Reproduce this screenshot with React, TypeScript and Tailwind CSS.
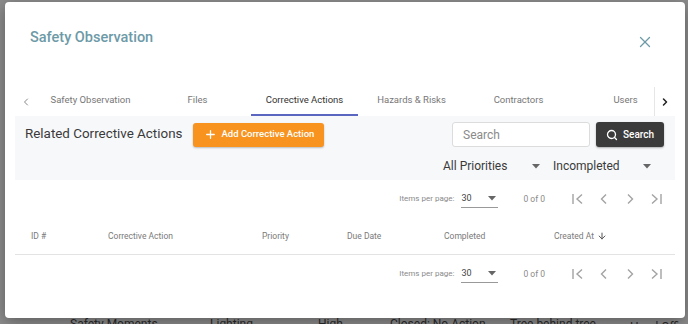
import { X, Plus, Search, ChevronLeft, ChevronRight, ArrowDown } from 'lucide-react';

const font = { fontFamily: 'Roboto, "Liberation Sans", sans-serif' };

const tabs = ['Safety Observation', 'Files', 'Corrective Actions', 'Hazards & Risks', 'Contractors', 'Users'];

function Caret() {
  return (
    <svg width="8" height="5" viewBox="0 0 8 5" className="shrink-0">
      <path d="M0 0 L8 0 L4 4.5 Z" fill="#666" />
    </svg>
  );
}

function PageIcons() {
  return (
    <div className="flex items-center gap-[12px] text-[#a3a3a3]">
      <svg width="14" height="14" viewBox="0 0 14 14" fill="none" stroke="currentColor" strokeWidth="1.4">
        <path d="M2 2 V12" />
        <path d="M11 2.5 L6 7 L11 11.5" />
      </svg>
      <svg width="14" height="14" viewBox="0 0 14 14" fill="none" stroke="currentColor" strokeWidth="1.4">
        <path d="M9 2.5 L4.5 7 L9 11.5" />
      </svg>
      <svg width="14" height="14" viewBox="0 0 14 14" fill="none" stroke="currentColor" strokeWidth="1.4">
        <path d="M5 2.5 L9.5 7 L5 11.5" />
      </svg>
      <svg width="14" height="14" viewBox="0 0 14 14" fill="none" stroke="currentColor" strokeWidth="1.4">
        <path d="M3 2.5 L8 7 L3 11.5" />
        <path d="M12 2 V12" />
      </svg>
    </div>
  );
}

function Paginator() {
  return (
    <div className="flex h-[38px] items-center justify-end pr-[12px] text-[8px] text-[#8a8a8a]">
      <span>Items per page:</span>
      <div className="ml-[7px] flex h-[18px] w-[37px] items-center justify-between border-b border-[#999] pr-[2px] text-[9px] text-[#444]">
        <span>30</span>
        <Caret />
      </div>
      <span className="ml-[25px] mr-[26px] text-[8.5px]">0 of 0</span>
      <PageIcons />
    </div>
  );
}

export default function App() {
  return (
    <div className="relative h-[324px] w-[688px] overflow-hidden bg-[#8d8d8d]" style={font}>
      {/* page behind the overlay */}
      <div className="flex h-full flex-col justify-end text-[12px] text-[#2a2a2a]">
        <div className="grid h-[8px] grid-cols-[140px_108px_72px_120px_120px_1fr] whitespace-nowrap pl-[70px] leading-[16px]">
          <span>Safety Moments</span>
          <span>Lighting</span>
          <span>High</span>
          <span>Closed: No Action</span>
          <span>Tree behind tree</span>
          <span className="pt-[3px]">Head Office</span>
        </div>
      </div>

      {/* dialog */}
      <div className="absolute left-[5px] top-[2px] flex h-[316px] w-[680px] flex-col rounded-[4px] bg-white shadow-[0_4px_16px_rgba(0,0,0,0.35)]">
        <div className="flex h-[85px] items-start justify-between pl-[25px] pr-[31px]">
          <h2 className="mt-[25px] text-[14.5px] font-medium text-[#6d9aa7]">Safety Observation</h2>
          <X className="mt-[31px]" size={18} color="#6d9aa7" strokeWidth={1.7} />
        </div>

        <div className="mx-[10px] flex h-[29px]">
          <div className="flex w-[22px] items-center justify-center text-[#888]">
            <ChevronLeft size={12} strokeWidth={2} />
          </div>
          <div className="flex flex-1 overflow-hidden">
            {tabs.map((t) => (
              <div
                key={t}
                className={
                  t === 'Corrective Actions'
                    ? 'flex w-[107px] shrink-0 items-center justify-center border-b-2 border-[#5a66c0] text-[9.5px] text-[#333]'
                    : 'flex w-[107px] shrink-0 items-center justify-center border-b-2 border-transparent text-[9.5px] text-[#777]'
                }
              >
                {t}
              </div>
            ))}
          </div>
          <div className="flex w-[21px] items-center justify-center border-l border-[#e6e6e6] text-[#222]">
            <ChevronRight size={12} strokeWidth={3} />
          </div>
        </div>

        <div className="mx-[10px] flex flex-1 flex-col">
          <div className="flex h-[64px] flex-col bg-[#f7f8fa] pl-[10px] pr-[11px] pt-[6px]">
            <div className="flex h-[25px] items-center">
              <span className="text-[13.4px] text-[#3a3a3a]">Related Corrective Actions</span>
              <button className="ml-[11px] flex h-[24px] w-[131px] items-center justify-center gap-[5px] rounded-[3px] bg-[#f7931e] text-[9.5px] font-medium text-white shadow-[0_1px_2px_rgba(0,0,0,0.25)]">
                <Plus size={13} strokeWidth={2.4} />
                Add Corrective Action
              </button>
              <div className="ml-auto flex h-[25px] w-[138px] items-center rounded-[3px] border border-[#dcdcdc] bg-white pl-[10px] text-[12px] text-[#8a8a8a]">
                Search
              </div>
              <button className="ml-[6px] flex h-[25px] w-[68px] items-center justify-center gap-[5px] rounded-[3px] bg-[#3b3b3b] text-[10px] font-medium text-white shadow-[0_1px_2px_rgba(0,0,0,0.3)]">
                <Search size={12} strokeWidth={2.6} />
                Search
              </button>
            </div>
            <div className="mt-[7px] flex h-[24px] items-center justify-end pr-[9px] text-[12px] text-[#3a3a3a]">
              <div className="flex w-[102px] items-center justify-between pr-[5px]">
                <span>All Priorities</span>
                <Caret />
              </div>
              <div className="ml-[8px] flex w-[102px] items-center justify-between pr-[4px]">
                <span>Incompleted</span>
                <Caret />
              </div>
            </div>
          </div>

          <Paginator />

          <div className="grid h-[37px] grid-cols-[77px_154px_85px_97px_110px_1fr] items-center border-b border-[#e3e3e3] pl-[16px] text-[8.5px] text-[#7a7a7a]">
            <span>ID #</span>
            <span>Corrective Action</span>
            <span>Priority</span>
            <span>Due Date</span>
            <span>Completed</span>
            <span className="flex items-center gap-[3px]">
              Created At
              <ArrowDown size={10} strokeWidth={2.4} color="#555" />
            </span>
          </div>

          <Paginator />
        </div>
      </div>
    </div>
  );
}
